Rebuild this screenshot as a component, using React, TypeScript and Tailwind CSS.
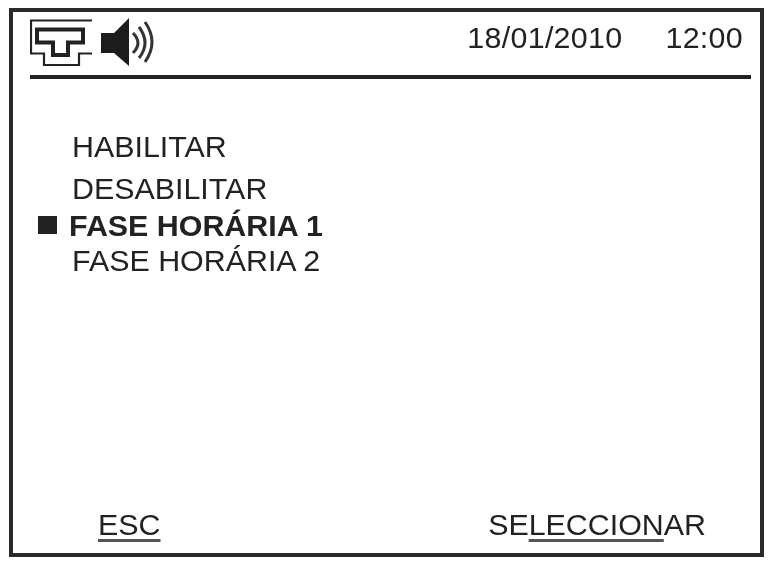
// Device screen: sound/network status bar, option list and soft key labels

function NetworkIcon() {
  return (
    <svg width="64" height="48" viewBox="0 0 64 48" fill="none" stroke="#222">
      {/* thin outer outline */}
      <path d="M62 1.500H1V34.500H14V46H49V34.500H62" strokeWidth="2.200" />
      {/* thick inner socket */}
      <path d="M7 10.500H53V23.500H38V36H23V23.500H7Z" strokeWidth="4" />
    </svg>
  );
}

function SpeakerIcon() {
  return (
    <svg width="55" height="50" viewBox="0 0 55 50" fill="none">
      <path d="M0 15H13L28 0V48L13 35H0Z" fill="#1c1c1c" />
      <path d="M32 15Q42 25 32 35" stroke="#333" strokeWidth="3" />
      <path d="M38 9Q50 25 38 40" stroke="#333" strokeWidth="3" />
      <path d="M44 4Q58 24 44 44" stroke="#333" strokeWidth="3" />
    </svg>
  );
}

export default function App() {
  return (
    <div className="h-[562px] w-[768px] bg-white pb-[5px] pl-[9px] pr-[4px] pt-[8px] font-['Liberation_Sans',Arial,sans-serif] text-[30.4px] leading-[34px] text-[#222] blur-[0.4px]">
      <div className="flex h-full flex-col border-[4px] border-[#2a2a2a] pb-[12px] pl-[17px] pr-[9px] pt-[6px]">
        {/* Status bar */}
        <div className="flex h-[50px] items-center justify-between">
          <div className="flex items-center gap-[7px]">
            <NetworkIcon />
            <SpeakerIcon />
          </div>
          <div className="flex gap-[43px] pb-[13px] pr-[8px]">
            <span className="tracking-[0.3px]">18/01/2010</span>
            <span className="tracking-[0.3px]">12:00</span>
          </div>
        </div>
        <div className="mt-[7px] h-[4px] w-full bg-[#222]" />

        {/* Options */}
        <ul className="mt-[50px] flex flex-col">
          <li className="pl-[42px]">HABILITAR</li>
          <li className="mt-[8px] pl-[42px]">DESABILITAR</li>
          <li className="mt-[3px] flex items-center font-bold">
            <span className="ml-[8px] mr-[12px] h-[18px] w-[19px] bg-[#222]" />
            FASE HORÁRIA 1
          </li>
          <li className="mt-[1px] pl-[42px]">FASE HORÁRIA 2</li>
        </ul>

        {/* Soft keys */}
        <div className="mt-auto flex justify-between pl-[68px] pr-[45px]">
          <span className="underline decoration-[3px] decoration-[#555] underline-offset-[4px]">ESC</span>
          <span>
            SE
            <span className="underline decoration-[3px] decoration-[#555] underline-offset-[4px]">LECCION</span>
            AR
          </span>
        </div>
      </div>
    </div>
  );
}
